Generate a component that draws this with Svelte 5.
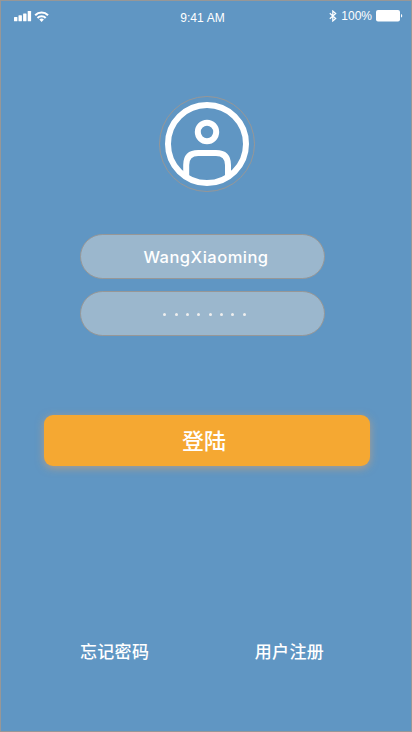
<script>
  const username = 'WangXiaoming';
  const passwordDots = Array.from({ length: 8 });
</script>

<main class="screen">
  <header class="status">
    <svg class="signal" width="36" height="12" viewBox="0 0 36 12" fill="#fff">
      <rect x="0" y="7" width="3.4" height="4.2" rx=".5" />
      <rect x="4.5" y="5.3" width="3.4" height="5.9" rx=".5" />
      <rect x="9.1" y="3.4" width="3.4" height="7.8" rx=".5" />
      <rect x="13.7" y="1" width="3.4" height="10.2" rx=".5" />
      <g fill="none" stroke="#fff" stroke-width="2.1">
        <path d="M21.2 5.2a9 9 0 0 1 12.8 0" />
        <path d="M23.5 7.9a5.8 5.8 0 0 1 8.2 0" />
      </g>
      <path d="M25.3 9.6a3.3 3.3 0 0 1 4.6 0l-2.3 2.3z" />
    </svg>
    <span class="time">9:41 AM</span>
    <span class="power">
      <svg width="8" height="12" viewBox="0 0 8 12" fill="none" stroke="#fff" stroke-width="1.2">
        <path d="M.8 3.2 6.7 8.5 3.8 11V1l2.9 2.5L.8 8.8" />
      </svg>
      <span class="percent">100%</span>
      <svg class="battery" width="27" height="12" viewBox="0 0 27 12" fill="#fff">
        <rect x="0" y="0" width="24" height="11.4" rx="2" />
        <path d="M25 4c1.6.3 1.6 3.3 0 3.6z" />
      </svg>
    </span>
  </header>

  <div class="avatar">
    <svg width="96" height="96" viewBox="0 0 96 96" fill="none" stroke="#fff" stroke-width="6">
      <circle cx="48" cy="48" r="47.5" stroke="#979797" stroke-width="1" />
      <circle cx="48" cy="48" r="39" />
      <circle cx="48" cy="36" r="9.2" />
      <path d="M27.2 81V69Q27.2 57 39.2 57H57Q69 57 69 69V81" />
    </svg>
  </div>

  <div class="fields">
    <div class="field name">{username}</div>
    <div class="field dots">
      {#each passwordDots as _}<i></i>{/each}
    </div>
  </div>

  <button class="login">登陆</button>

  <nav class="links">
    <span>忘记密码</span>
    <span>用户注册</span>
  </nav>
</main>

<style>
  .screen {
    box-sizing: border-box;
    width: 412px;
    height: 732px;
    border: 1px solid #979797;
    background: #6096c3;
    color: #fff;
    font-family: 'Liberation Sans', 'Noto Sans CJK SC', sans-serif;
    display: flex;
    flex-direction: column;
    overflow: hidden;
  }
  .status {
    height: 32px;
    flex: none;
    display: grid;
    grid-template-columns: 1fr auto 1fr;
    align-items: center;
    padding: 0 8px 0 13px;
    box-sizing: border-box;
    font-size: 12px;
    line-height: 14px;
  }
  .signal { margin-top: -2px; }
  .time { padding-top: 2px; margin: 0 12px 0 0; letter-spacing: .1px; }
  .power {
    display: flex;
    justify-content: flex-end;
    align-items: center;
    margin-top: -2px;
  }
  .percent { margin: 0 4px 0 4px; }
  .avatar {
    margin: 63px 0 0 158px;
    height: 96px;
  }
  .avatar svg { display: block; }
  .fields {
    display: flex;
    flex-direction: column;
    gap: 12px;
    margin: 42px 0 0 79px;
    width: 245px;
  }
  .field {
    box-sizing: border-box;
    height: 45px;
    border: 1px solid #979797;
    border-radius: 23px;
    background: #9bb7cd;
    display: flex;
    align-items: center;
    justify-content: center;
    font-family: Inter, sans-serif;
    font-size: 16.5px;
    font-weight: 500;
  }
  .name {
    padding: 1px 0 0 7px;
    letter-spacing: .5px;
  }
  .dots { gap: 8.4px; padding: 1px 0 0 4px; }
  .dots i {
    width: 3px;
    height: 3px;
    border-radius: 50%;
    background: #eee;
  }
  .login {
    margin: 79px 0 0 43px;
    padding: 0 6px 2px 0;
    width: 326px;
    height: 51px;
    border: 0;
    border-radius: 9px;
    background: #f5a832;
    box-shadow: 0 2px 8px rgba(200, 160, 120, .75);
    color: #fff;
    font: 500 22px/49px 'Noto Sans CJK SC', sans-serif;
  }
  .links {
    display: flex;
    justify-content: space-between;
    margin: 172px 87px 0 79px;
    font: 500 17px/26px 'Noto Sans CJK SC', sans-serif;
    letter-spacing: .3px;
  }
</style>
